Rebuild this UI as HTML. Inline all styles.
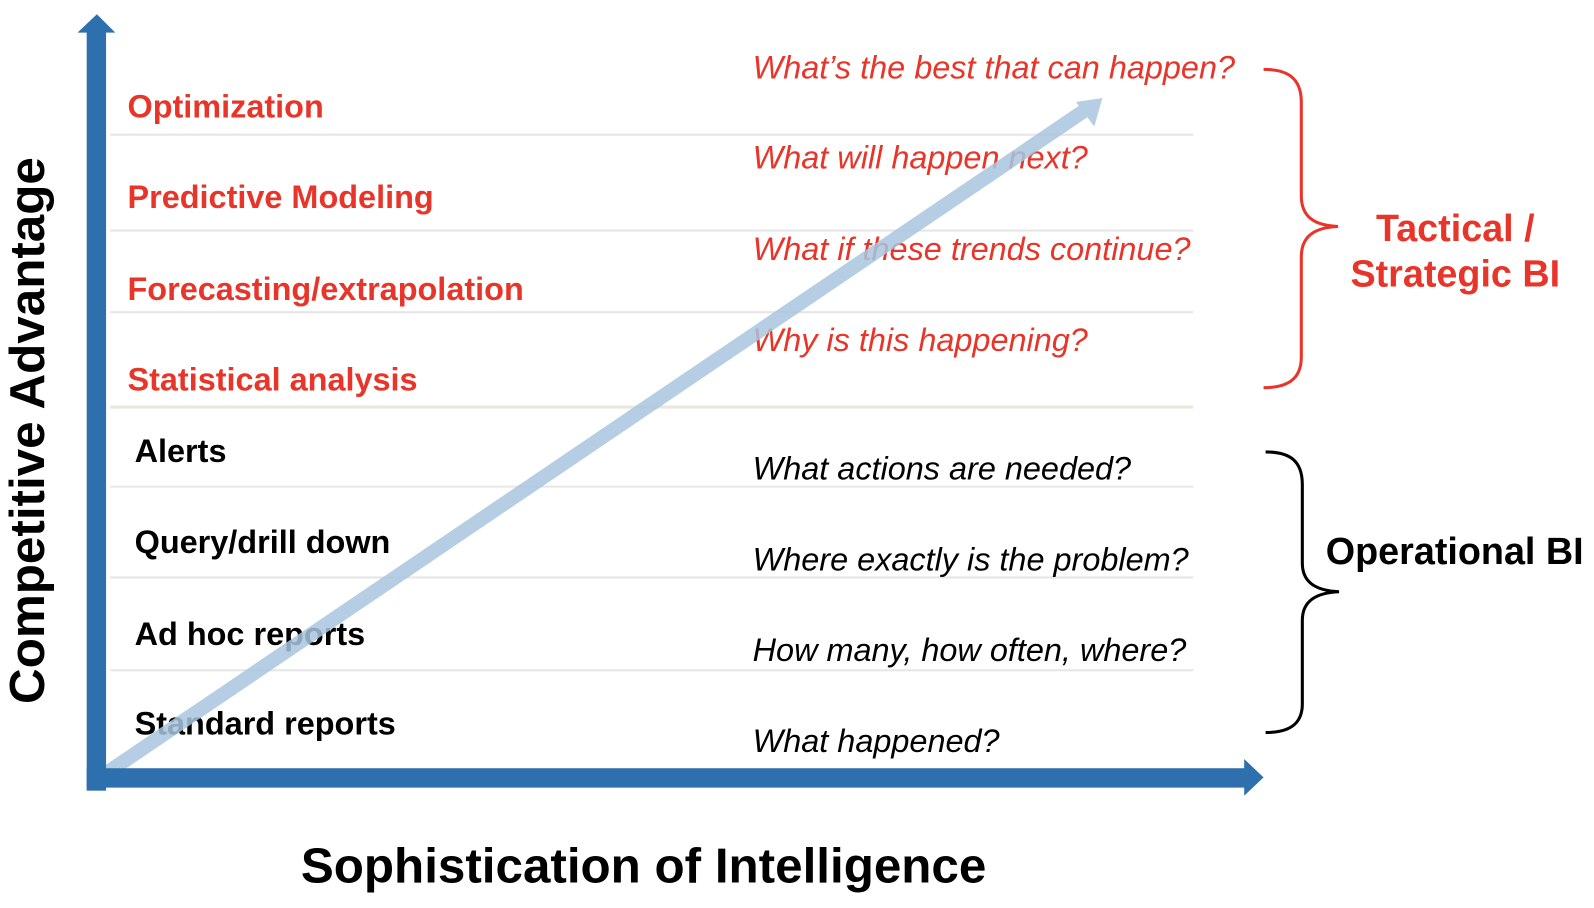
<!DOCTYPE html>
<html><head><meta charset="utf-8"><style>
html,body{margin:0;padding:0;background:#fff;}
svg{display:block}
text{font-family:"Liberation Sans",Arial,sans-serif}
.b{font-weight:bold;font-size:31.8px}
.r{fill:#e8352a}
.i{font-style:italic;font-size:31.8px}
</style></head><body>
<svg width="1594" height="908" viewBox="0 0 1563 890" preserveAspectRatio="none" xmlns="http://www.w3.org/2000/svg">
<g stroke="#e6e6e6" stroke-width="2">
<line x1="108" y1="132" x2="1170" y2="132"/>
<line x1="108" y1="226" x2="1170" y2="226"/>
<line x1="108" y1="306" x2="1170" y2="306"/>
<line x1="108" y1="477" x2="1170" y2="477"/>
<line x1="108" y1="566" x2="1170" y2="566"/>
<line x1="108" y1="657" x2="1170" y2="657"/>
</g>
<line x1="108" y1="399" x2="1170" y2="399" stroke="#e9e8dc" stroke-width="3"/>
<text class="b r" x="125" y="115">Optimization</text>
<text class="b r" x="125" y="204">Predictive Modeling</text>
<text class="b r" x="125" y="294">Forecasting/extrapolation</text>
<text class="b r" x="125" y="383">Statistical analysis</text>
<text class="b" x="132" y="453">Alerts</text>
<text class="b" x="132" y="542">Query/drill down</text>
<text class="b" x="132" y="632">Ad hoc reports</text>
<text class="b" x="132" y="720">Standard reports</text>
<text class="i r" x="738" y="77">What’s the best that can happen?</text>
<text class="i r" x="738" y="165">What will happen next?</text>
<text class="i r" x="738" y="255">What if these trends continue?</text>
<text class="i r" x="738" y="344">Why is this happening?</text>
<text class="i" x="738" y="470">What actions are needed?</text>
<text class="i" x="738" y="559">Where exactly is the problem?</text>
<text class="i" x="738" y="648">How many, how often, where?</text>
<text class="i" x="738" y="737">What happened?</text>
<g opacity="0.85">
<line x1="104" y1="758" x2="1064" y2="108" stroke="#a9c6e0" stroke-width="14"/>
<polygon points="1081,96 1055,100 1073,124" fill="#a9c6e0"/>
</g>
<rect x="85" y="30" width="19" height="745" fill="#2e70ad"/>
<polygon points="95,14 76,32 113,32" fill="#2e70ad"/>
<rect x="85" y="753" width="1136" height="19" fill="#2e70ad"/>
<polygon points="1239,762 1220,744 1220,780" fill="#2e70ad"/>
<path d="M1239,68 C1262,68 1276,76 1276,100 L1276,192 C1276,212 1288,221 1312,222 C1288,223 1276,232 1276,252 L1276,350 C1276,372 1262,380 1239,380" fill="none" stroke="#e8352a" stroke-width="3"/>
<path d="M1241,443 C1264,443 1277,451 1277,475 L1277,552 C1277,570 1289,579 1313,580 C1289,581 1277,590 1277,608 L1277,690 C1277,710 1264,718 1241,718" fill="none" stroke="#000" stroke-width="3"/>
<text class="r" x="1427" y="236" text-anchor="middle" font-weight="bold" font-size="37">Tactical /</text>
<text class="r" x="1427" y="281" text-anchor="middle" font-weight="bold" font-size="37">Strategic BI</text>
<text x="1300" y="553" font-weight="bold" font-size="37">Operational BI</text>
<text x="295" y="865" font-weight="bold" font-size="48.4">Sophistication of Intelligence</text>
<text transform="translate(43,422) rotate(-90)" text-anchor="middle" font-weight="bold" font-size="48.4">Competitive Advantage</text>
</svg>
</body></html>
